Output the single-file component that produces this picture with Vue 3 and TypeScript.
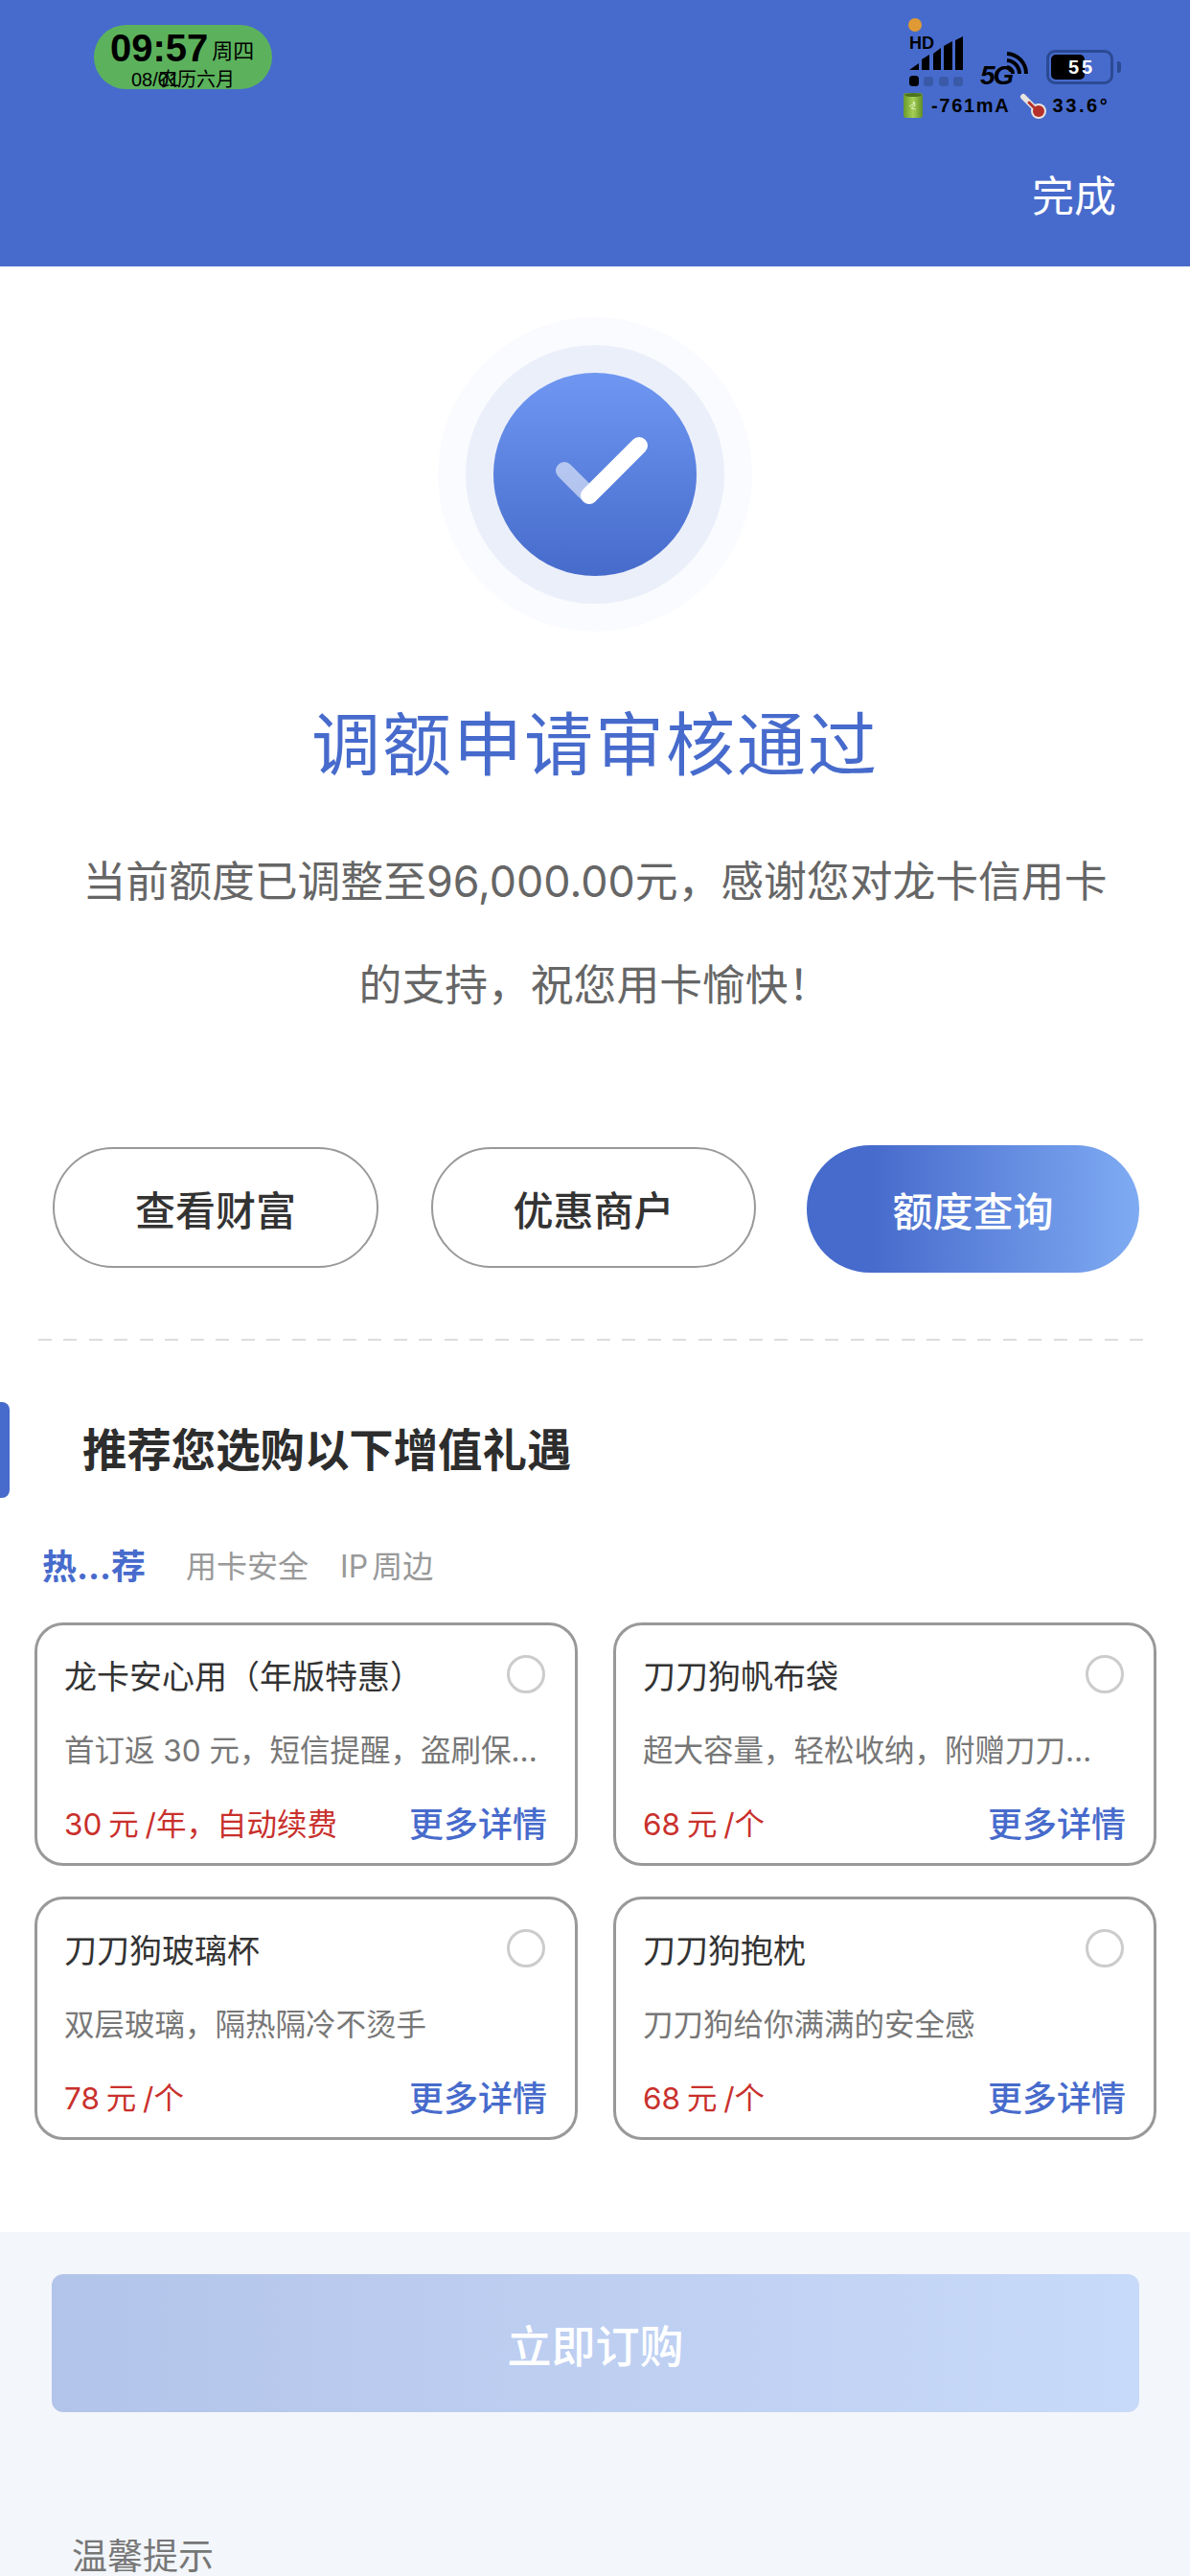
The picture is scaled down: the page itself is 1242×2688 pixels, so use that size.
<template>
  <div class="page">
    <header class="top">
      <div class="status">
        <div class="clock">
          <div class="clock-main"><span class="time">09:57</span><span class="week">周四</span></div>
          <div class="clock-sub"><span class="date">08/01</span><span class="lunar">农历六月</span></div>
        </div>
        <div class="sys">
          <div class="sys-top">
            <svg class="signal" width="58" height="72" viewBox="0 0 58 72">
              <circle cx="7" cy="7" r="7" fill="#e09a35" />
              <text x="1" y="32" class="hd">HD</text>
              <path d="M1 54L11 47V54ZM14 54V43L22 38V54ZM26 54V37L34 31V54ZM37 54V29L46 24V54ZM49 54V23L57 19V54Z" fill="#000" />
              <rect x="1" y="60" width="10" height="11" rx="3.5" fill="#000" />
              <rect x="16" y="61" width="10" height="10" rx="3" fill="#3a5aa8" />
              <rect x="32" y="61" width="10" height="10" rx="3" fill="#3a5aa8" />
              <rect x="47" y="61" width="10" height="10" rx="3" fill="#3a5aa8" />
            </svg>
            <svg class="net" width="52" height="40" viewBox="0 0 52 40">
              <text x="1" y="35" class="five-g">5G</text>
              <path d="M29 3A21 21 0 0 1 49 24M29 10A14 14 0 0 1 42 24M29 17A7 7 0 0 1 35 24" fill="none" stroke="#000" stroke-width="4" />
            </svg>
            <div class="battery">
              <div class="battery-body">
                <div class="battery-fill"></div>
                <span class="battery-num">55</span>
              </div>
              <div class="battery-cap"></div>
            </div>
          </div>
          <div class="sys-bottom">
            <svg class="can" width="20" height="28" viewBox="0 0 20 28">
              <defs>
                <linearGradient id="can" x1="0" x2="1" y1="0" y2="0">
                  <stop offset="0" stop-color="#6b9a2a" />
                  <stop offset=".5" stop-color="#a5cf55" />
                  <stop offset="1" stop-color="#5f8d26" />
                </linearGradient>
              </defs>
              <rect x="0" y="1" width="20" height="26" rx="3" fill="url(#can)" />
              <ellipse cx="10" cy="3" rx="9" ry="2" fill="#4c7420" />
              <path d="M6 15l4-2 1-3 1 4-4 3 5 1" fill="none" stroke="#dff0c0" stroke-width="1" />
            </svg>
            <span class="sys-text ma">-761mA</span>
            <svg class="thermo" width="28" height="28" viewBox="0 0 28 28">
              <path d="M4 5l14 14" stroke="#e8e4e0" stroke-width="6" stroke-linecap="round" />
              <circle cx="20" cy="20" r="8" fill="#e8e4e0" />
              <circle cx="20" cy="20" r="6" fill="#b5302b" />
              <path d="M10 11l8 8" stroke="#b5302b" stroke-width="3" stroke-linecap="round" />
            </svg>
            <span class="sys-text temp">33.6°</span>
          </div>
        </div>
      </div>
      <div class="done">完成</div>
    </header>

    <main class="content">
      <div class="ring-outer">
        <div class="ring-mid">
          <div class="ring-inner">
            <svg width="120" height="100" viewBox="0 0 120 100">
              <path d="M28 42l26 26" stroke="#fff" stroke-opacity=".55" stroke-width="18" stroke-linecap="round" />
              <path d="M54 68l52-52" stroke="#fff" stroke-width="18" stroke-linecap="round" />
            </svg>
          </div>
        </div>
      </div>
      <h1 class="result-title">调额申请审核通过</h1>
      <p class="result-desc">当前额度已调整至96,000.00元，感谢您对龙卡信用卡<br />的支持，祝您用卡愉快！</p>

      <div class="actions">
        <button class="action action-a">查看财富</button>
        <button class="action action-b">优惠商户</button>
        <button class="action action-main">额度查询</button>
      </div>

      <div class="dashed"></div>

      <div class="section-head">
        <i class="section-mark"></i>
        <h2 class="section-title">推荐您选购以下增值礼遇</h2>
      </div>

      <div class="tabs">
        <span class="tab tab-on">热...荐</span>
        <span class="tab">用卡安全</span>
        <span class="tab tab-ip">IP 周边</span>
      </div>

      <div class="cards">
        <div v-for="item in items" :key="item.name" class="card">
          <div class="card-top">
            <span class="card-name">{{ item.name }}</span>
            <i class="radio"></i>
          </div>
          <div class="card-desc">{{ item.desc }}</div>
          <div class="card-foot">
            <span class="card-price">{{ item.price }}</span>
            <span class="card-more">更多详情</span>
          </div>
        </div>
      </div>
    </main>

    <footer class="bottom">
      <button class="buy">立即订购</button>
      <div class="tips">温馨提示</div>
    </footer>
  </div>
</template>

<script setup lang="ts">
interface Item {
  name: string
  desc: string
  price: string
}

const items: Item[] = [
  { name: '龙卡安心用（年版特惠）', desc: '首订返 30 元，短信提醒，盗刷保...', price: '30 元 /年，自动续费' },
  { name: '刀刀狗帆布袋', desc: '超大容量，轻松收纳，附赠刀刀…', price: '68 元 /个' },
  { name: '刀刀狗玻璃杯', desc: '双层玻璃，隔热隔冷不烫手', price: '78 元 /个' },
  { name: '刀刀狗抱枕', desc: '刀刀狗给你满满的安全感', price: '68 元 /个' },
]
</script>

<style>
html,
body {
  margin: 0;
  background: #fff;
}
</style>

<style scoped>
.page {
  width: 1242px;
  height: 2688px;
  overflow: hidden;
  display: flex;
  flex-direction: column;
  font-family: "Inter", "Noto Sans CJK SC", sans-serif;
  color: #333;
}

.top {
  height: 278px;
  flex: none;
  background: #476bcc;
  box-sizing: border-box;
  padding: 26px 77px 0 98px;
}
.status {
  display: flex;
  justify-content: space-between;
  height: 130px;
}
.clock {
  width: 186px;
  height: 67px;
  background: #5cb25c;
  border-radius: 34px;
  box-sizing: border-box;
  padding: 4px 0 0 17px;
  font-family: "Liberation Sans", "Noto Sans CJK SC", sans-serif;
  color: #000;
}
.clock-main {
  display: flex;
  align-items: flex-end;
  height: 40px;
  line-height: 40px;
}
.time {
  font-size: 40px;
  font-weight: 700;
}
.week {
  font-size: 22px;
  line-height: 32px;
  margin-left: 4px;
}
.clock-sub {
  position: relative;
  font-size: 20px;
  line-height: 24px;
  padding-left: 22px;
  margin-top: 1px;
}
.lunar {
  position: absolute;
  left: 50px;
  top: 0;
  white-space: nowrap;
  font-size: 20px;
}

.sys {
  width: 230px;
  margin-right: -7px;
  margin-top: -7px;
}
.sys-top {
  display: flex;
  align-items: flex-start;
}
.signal {
  margin-left: 6px;
}
.hd {
  font: 700 18px "Liberation Sans", sans-serif;
}
.net {
  margin: 34px 0 0 16px;
}
.five-g {
  font: italic 700 28px "Liberation Sans", sans-serif;
  letter-spacing: -2px;
}
.battery {
  display: flex;
  align-items: center;
  margin: 33px 0 0 18px;
}
.battery-body {
  position: relative;
  width: 70px;
  height: 36px;
  box-sizing: border-box;
  border: 3px solid #2b4a94;
  border-radius: 9px;
}
.battery-fill {
  width: 35px;
  height: 26px;
  margin: 2px 0 0 2px;
  background: #000;
  border-radius: 5px;
}
.battery-num {
  position: absolute;
  left: 20px;
  top: 3px;
  font: 700 20px/24px "Liberation Sans", sans-serif;
  letter-spacing: 3px;
  color: #fff;
}
.battery-cap {
  width: 4px;
  height: 12px;
  background: #2b4a94;
  border-radius: 0 3px 3px 0;
  margin-left: 4px;
}
.sys-bottom {
  display: flex;
  align-items: center;
  height: 30px;
  margin-top: 2px;
}
.can {
  margin-left: 1px;
}
.sys-text {
  font: 700 20px/30px "Liberation Sans", sans-serif;
  letter-spacing: 1.7px;
  color: #000;
}
.ma {
  margin-left: 9px;
}
.temp {
  letter-spacing: 2.6px;
}
.thermo {
  margin: 0 6px 0 10px;
}

.done {
  text-align: right;
  font-size: 44px;
  line-height: 60px;
  margin-top: 19px;
  color: #fff;
}

.content {
  background: #fff;
  flex: none;
  height: 2051px;
  box-sizing: border-box;
  padding-top: 53px;
}
.ring-outer,
.ring-mid,
.ring-inner {
  border-radius: 50%;
  display: flex;
  align-items: center;
  justify-content: center;
}
.ring-outer {
  width: 328px;
  height: 328px;
  margin: 0 auto;
  background: #fafbfe;
}
.ring-mid {
  width: 270px;
  height: 270px;
  background: #ebeffa;
}
.ring-inner {
  width: 212px;
  height: 212px;
  background: linear-gradient(180deg, #6f97f2, #466bcb);
}
.ring-inner svg {
  margin-top: 8px;
}
.result-title {
  margin: 68px 0 0;
  text-align: center;
  font-size: 72px;
  line-height: 100px;
  font-weight: 400;
  letter-spacing: 2px;
  color: #476bcc;
}
.result-desc {
  margin: 39px 0 0;
  text-align: center;
  font-size: 44.8px;
  line-height: 108px;
  color: #666;
}

.actions {
  display: flex;
  align-items: flex-start;
  height: 133px;
  margin-top: 113px;
  padding-left: 55px;
}
.action {
  height: 126px;
  box-sizing: border-box;
  margin-top: 2px;
  border: 2px solid #999;
  border-radius: 63px;
  background: #fff;
  font-family: inherit;
  font-size: 42px;
  font-weight: 500;
  color: #333;
  padding: 0;
}
.action-a {
  width: 340px;
}
.action-b {
  width: 339px;
  margin-left: 55px;
}
.action-main {
  width: 347px;
  height: 133px;
  margin-top: 0;
  margin-left: 53px;
  border: 0;
  border-radius: 66px;
  background: linear-gradient(90deg, #476bcc 20%, #7fabf3 100%);
  color: #fff;
}

.dashed {
  height: 2px;
  margin: 69px 47px 0 40px;
  background: repeating-linear-gradient(90deg, #ddd 0 14px, transparent 14px 26.5px);
}

.section-head {
  display: flex;
  align-items: center;
  height: 100px;
  margin-top: 64px;
}
.section-mark {
  width: 10px;
  height: 100px;
  background: #476bcc;
  border-radius: 0 8px 8px 0;
}
.section-title {
  margin: 0 0 0 76px;
  font-size: 46.4px;
  line-height: 70px;
  font-weight: 700;
  color: #2d2d2d;
}

.tabs {
  display: flex;
  align-items: center;
  height: 60px;
  margin-top: 39px;
  padding-left: 44px;
  gap: 42px;
}
.tab {
  font-size: 32px;
  color: #999;
}
.tab-on {
  font-size: 36px;
  font-weight: 700;
  color: #476bcc;
}
.tab-ip {
  margin-left: -9px;
  word-spacing: -5px;
}

.cards {
  display: grid;
  grid-template-columns: 567px 567px;
  grid-auto-rows: 254px;
  column-gap: 37px;
  row-gap: 32px;
  margin-top: 31px;
  padding-left: 36px;
}
.card {
  box-sizing: border-box;
  border: 3px solid #999;
  border-radius: 30px;
  padding: 26px 29px 0 28px;
  min-width: 0;
}
.card-top {
  display: flex;
  align-items: center;
  justify-content: space-between;
  height: 50px;
}
.card-name {
  font-size: 34px;
  color: #333;
}
.radio {
  width: 40px;
  height: 40px;
  margin-right: 2px;
  box-sizing: border-box;
  border: 3px solid #ccc;
  border-radius: 50%;
}
.card-desc {
  margin-top: 33px;
  height: 44px;
  line-height: 44px;
  font-size: 31.5px;
  color: #777;
  white-space: nowrap;
}
.card-foot {
  display: flex;
  align-items: center;
  justify-content: space-between;
  height: 50px;
  margin-top: 27px;
}
.card-price {
  font-size: 31.5px;
  word-spacing: -2px;
  color: #c9302c;
}
.card-more {
  font-size: 36px;
  font-weight: 500;
  color: #476bcc;
}

.bottom {
  flex: 1;
  background: #f3f6fa;
  padding: 44px 53px 0 54px;
}
.buy {
  display: block;
  width: 100%;
  height: 144px;
  border: 0;
  border-radius: 12px;
  background: linear-gradient(90deg, #b3c4ea, #c8daf9);
  font-family: inherit;
  font-size: 46px;
  font-weight: 500;
  color: #fff;
}
.tips {
  margin: 126px 0 0 21px;
  font-size: 37px;
  line-height: 50px;
  color: #777;
}
</style>
